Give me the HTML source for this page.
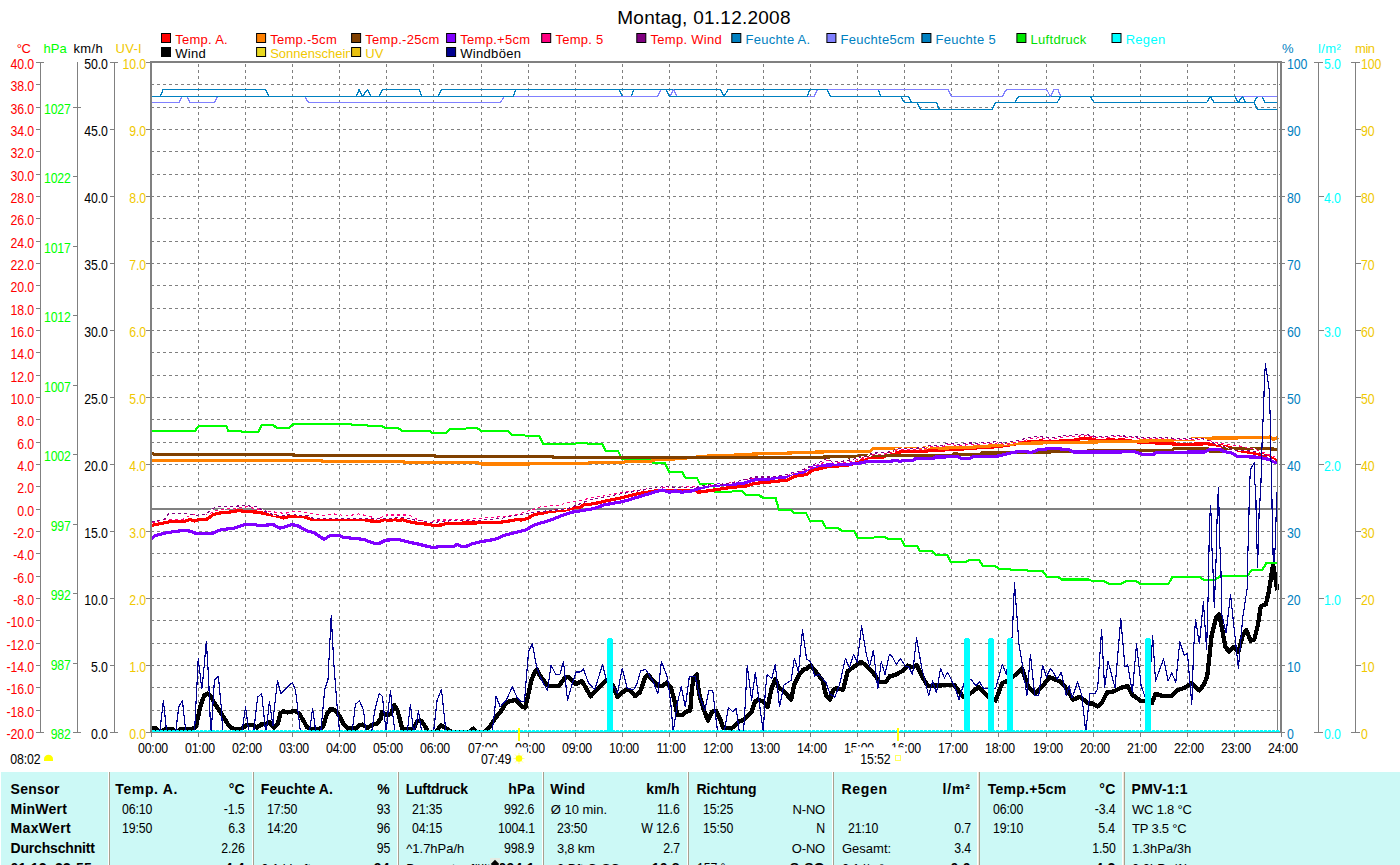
<!DOCTYPE html>
<html><head><meta charset="utf-8"><title>Montag, 01.12.2008</title>
<style>
html,body{margin:0;padding:0;background:#fff;}
body{width:1400px;height:865px;overflow:hidden;position:relative;font-family:"Liberation Sans",sans-serif;}
svg{position:absolute;left:0;top:0;}
svg text{font-family:"Liberation Sans",sans-serif;font-size:13px;letter-spacing:-0.45px;}
.b{font-weight:bold;}
#tbl{position:absolute;left:1px;top:772px;width:1399px;height:93px;background:#CCF9F6;overflow:hidden;}
#tbl div{position:absolute;white-space:nowrap;font-size:13px;line-height:15px;color:#000;}
#tbl .sep3{width:3px;top:0;height:93px;background:linear-gradient(90deg,#ffffff 0 1px,#F0E8D8 1px 2px,#A8A090 2px 3px);}
#tbl .sep{width:2px;top:0;height:93px;background:linear-gradient(90deg,#ffffff 0 1px,#A8A090 1px 2px);}
</style></head><body>
<svg width="1400" height="865" viewBox="0 0 1400 865">
<text x="704" y="24" text-anchor="middle" style="font-size:19px;letter-spacing:0.25px">Montag, 01.12.2008</text>
<rect x="161.5" y="33.5" width="9" height="9" fill="#FF0000" stroke="#000" stroke-width="1"/>
<text x="175.2" y="43.8" fill="#FF0000" style="letter-spacing:0.28px">Temp. A.</text>
<rect x="256.6" y="33.5" width="9" height="9" fill="#FF8000" stroke="#000" stroke-width="1"/>
<text x="270.2" y="43.8" fill="#FF0000" style="letter-spacing:0.28px">Temp.-5cm</text>
<rect x="351.6" y="33.5" width="9" height="9" fill="#804000" stroke="#000" stroke-width="1"/>
<text x="365.3" y="43.8" fill="#FF0000" style="letter-spacing:0.28px">Temp.-25cm</text>
<rect x="446.6" y="33.5" width="9" height="9" fill="#8000FF" stroke="#000" stroke-width="1"/>
<text x="460.3" y="43.8" fill="#FF0000" style="letter-spacing:0.28px">Temp.+5cm</text>
<rect x="541.7" y="33.5" width="9" height="9" fill="#FF0080" stroke="#000" stroke-width="1"/>
<text x="555.4" y="43.8" fill="#FF0000" style="letter-spacing:0.28px">Temp. 5</text>
<rect x="636.8" y="33.5" width="9" height="9" fill="#800080" stroke="#000" stroke-width="1"/>
<text x="650.5" y="43.8" fill="#FF0000" style="letter-spacing:0.28px">Temp. Wind</text>
<rect x="731.8" y="33.5" width="9" height="9" fill="#0080C0" stroke="#000" stroke-width="1"/>
<text x="745.5" y="43.8" fill="#0080C0" style="letter-spacing:0.28px">Feuchte A.</text>
<rect x="826.9" y="33.5" width="9" height="9" fill="#8080FF" stroke="#000" stroke-width="1"/>
<text x="840.6" y="43.8" fill="#0080C0" style="letter-spacing:0.28px">Feuchte5cm</text>
<rect x="921.9" y="33.5" width="9" height="9" fill="#0080C0" stroke="#000" stroke-width="1"/>
<text x="935.6" y="43.8" fill="#0080C0" style="letter-spacing:0.28px">Feuchte 5</text>
<rect x="1016.9" y="33.5" width="9" height="9" fill="#00E800" stroke="#000" stroke-width="1"/>
<text x="1030.6" y="43.8" fill="#00E000" style="letter-spacing:0.28px">Luftdruck</text>
<rect x="1112.0" y="33.5" width="9" height="9" fill="#00FFFF" stroke="#000" stroke-width="1"/>
<text x="1125.7" y="43.8" fill="#00FFFF" style="letter-spacing:0.28px">Regen</text>
<text x="175.2" y="57.6" fill="#000" style="letter-spacing:0.3px">Wind</text>
<text x="270.2" y="57.6" fill="#F0C800" style="letter-spacing:0px">Sonnenschein</text>
<text x="365.3" y="57.6" fill="#F0C800" style="letter-spacing:0px">UV</text>
<text x="460.3" y="57.6" fill="#000" style="letter-spacing:0.3px">Windböen</text>
<rect x="161.5" y="47.5" width="9" height="9" fill="#000000" stroke="#000" stroke-width="1"/>
<rect x="256.6" y="47.5" width="9" height="9" fill="#E8D820" stroke="#000" stroke-width="1"/>
<rect x="350.1" y="45" width="13" height="14" fill="#fff"/>
<rect x="351.6" y="47.5" width="9" height="9" fill="#E8C010" stroke="#000" stroke-width="1"/>
<rect x="446.6" y="47.5" width="9" height="9" fill="#000090" stroke="#000" stroke-width="1"/>
<g shape-rendering="crispEdges" fill="none">
<line x1="151" x2="1280" y1="84.5" y2="84.5" stroke="#808080" stroke-width="1" stroke-dasharray="3 3"/>
<line x1="151" x2="1280" y1="107.5" y2="107.5" stroke="#808080" stroke-width="1" stroke-dasharray="3 3"/>
<line x1="151" x2="1280" y1="129.5" y2="129.5" stroke="#808080" stroke-width="1" stroke-dasharray="3 3"/>
<line x1="151" x2="1280" y1="151.5" y2="151.5" stroke="#808080" stroke-width="1" stroke-dasharray="3 3"/>
<line x1="151" x2="1280" y1="174.5" y2="174.5" stroke="#808080" stroke-width="1" stroke-dasharray="3 3"/>
<line x1="151" x2="1280" y1="196.5" y2="196.5" stroke="#808080" stroke-width="1" stroke-dasharray="3 3"/>
<line x1="151" x2="1280" y1="218.5" y2="218.5" stroke="#808080" stroke-width="1" stroke-dasharray="3 3"/>
<line x1="151" x2="1280" y1="241.5" y2="241.5" stroke="#808080" stroke-width="1" stroke-dasharray="3 3"/>
<line x1="151" x2="1280" y1="263.5" y2="263.5" stroke="#808080" stroke-width="1" stroke-dasharray="3 3"/>
<line x1="151" x2="1280" y1="285.5" y2="285.5" stroke="#808080" stroke-width="1" stroke-dasharray="3 3"/>
<line x1="151" x2="1280" y1="308.5" y2="308.5" stroke="#808080" stroke-width="1" stroke-dasharray="3 3"/>
<line x1="151" x2="1280" y1="330.5" y2="330.5" stroke="#808080" stroke-width="1" stroke-dasharray="3 3"/>
<line x1="151" x2="1280" y1="352.5" y2="352.5" stroke="#808080" stroke-width="1" stroke-dasharray="3 3"/>
<line x1="151" x2="1280" y1="375.5" y2="375.5" stroke="#808080" stroke-width="1" stroke-dasharray="3 3"/>
<line x1="151" x2="1280" y1="397.5" y2="397.5" stroke="#808080" stroke-width="1" stroke-dasharray="3 3"/>
<line x1="151" x2="1280" y1="419.5" y2="419.5" stroke="#808080" stroke-width="1" stroke-dasharray="3 3"/>
<line x1="151" x2="1280" y1="442.5" y2="442.5" stroke="#808080" stroke-width="1" stroke-dasharray="3 3"/>
<line x1="151" x2="1280" y1="464.5" y2="464.5" stroke="#808080" stroke-width="1" stroke-dasharray="3 3"/>
<line x1="151" x2="1280" y1="486.5" y2="486.5" stroke="#808080" stroke-width="1" stroke-dasharray="3 3"/>
<line x1="151" x2="1280" y1="509.5" y2="509.5" stroke="#808080" stroke-width="1" stroke-dasharray="3 3"/>
<line x1="151" x2="1280" y1="531.5" y2="531.5" stroke="#808080" stroke-width="1" stroke-dasharray="3 3"/>
<line x1="151" x2="1280" y1="553.5" y2="553.5" stroke="#808080" stroke-width="1" stroke-dasharray="3 3"/>
<line x1="151" x2="1280" y1="576.5" y2="576.5" stroke="#808080" stroke-width="1" stroke-dasharray="3 3"/>
<line x1="151" x2="1280" y1="598.5" y2="598.5" stroke="#808080" stroke-width="1" stroke-dasharray="3 3"/>
<line x1="151" x2="1280" y1="620.5" y2="620.5" stroke="#808080" stroke-width="1" stroke-dasharray="3 3"/>
<line x1="151" x2="1280" y1="643.5" y2="643.5" stroke="#808080" stroke-width="1" stroke-dasharray="3 3"/>
<line x1="151" x2="1280" y1="665.5" y2="665.5" stroke="#808080" stroke-width="1" stroke-dasharray="3 3"/>
<line x1="151" x2="1280" y1="687.5" y2="687.5" stroke="#808080" stroke-width="1" stroke-dasharray="3 3"/>
<line x1="151" x2="1280" y1="710.5" y2="710.5" stroke="#808080" stroke-width="1" stroke-dasharray="3 3"/>
<line x1="198.5" x2="198.5" y1="733" y2="63" stroke="#808080" stroke-width="1" stroke-dasharray="3 3"/>
<line x1="245.5" x2="245.5" y1="733" y2="63" stroke="#808080" stroke-width="1" stroke-dasharray="3 3"/>
<line x1="292.5" x2="292.5" y1="733" y2="63" stroke="#808080" stroke-width="1" stroke-dasharray="3 3"/>
<line x1="339.5" x2="339.5" y1="733" y2="63" stroke="#808080" stroke-width="1" stroke-dasharray="3 3"/>
<line x1="386.5" x2="386.5" y1="733" y2="63" stroke="#808080" stroke-width="1" stroke-dasharray="3 3"/>
<line x1="433.5" x2="433.5" y1="733" y2="63" stroke="#808080" stroke-width="1" stroke-dasharray="3 3"/>
<line x1="481.5" x2="481.5" y1="733" y2="63" stroke="#808080" stroke-width="1" stroke-dasharray="3 3"/>
<line x1="528.5" x2="528.5" y1="733" y2="63" stroke="#808080" stroke-width="1" stroke-dasharray="3 3"/>
<line x1="575.5" x2="575.5" y1="733" y2="63" stroke="#808080" stroke-width="1" stroke-dasharray="3 3"/>
<line x1="622.5" x2="622.5" y1="733" y2="63" stroke="#808080" stroke-width="1" stroke-dasharray="3 3"/>
<line x1="669.5" x2="669.5" y1="733" y2="63" stroke="#808080" stroke-width="1" stroke-dasharray="3 3"/>
<line x1="716.5" x2="716.5" y1="733" y2="63" stroke="#808080" stroke-width="1" stroke-dasharray="3 3"/>
<line x1="763.5" x2="763.5" y1="733" y2="63" stroke="#808080" stroke-width="1" stroke-dasharray="3 3"/>
<line x1="810.5" x2="810.5" y1="733" y2="63" stroke="#808080" stroke-width="1" stroke-dasharray="3 3"/>
<line x1="857.5" x2="857.5" y1="733" y2="63" stroke="#808080" stroke-width="1" stroke-dasharray="3 3"/>
<line x1="904.5" x2="904.5" y1="733" y2="63" stroke="#808080" stroke-width="1" stroke-dasharray="3 3"/>
<line x1="951.5" x2="951.5" y1="733" y2="63" stroke="#808080" stroke-width="1" stroke-dasharray="3 3"/>
<line x1="998.5" x2="998.5" y1="733" y2="63" stroke="#808080" stroke-width="1" stroke-dasharray="3 3"/>
<line x1="1046.5" x2="1046.5" y1="733" y2="63" stroke="#808080" stroke-width="1" stroke-dasharray="3 3"/>
<line x1="1093.5" x2="1093.5" y1="733" y2="63" stroke="#808080" stroke-width="1" stroke-dasharray="3 3"/>
<line x1="1140.5" x2="1140.5" y1="733" y2="63" stroke="#808080" stroke-width="1" stroke-dasharray="3 3"/>
<line x1="1187.5" x2="1187.5" y1="733" y2="63" stroke="#808080" stroke-width="1" stroke-dasharray="3 3"/>
<line x1="1234.5" x2="1234.5" y1="733" y2="63" stroke="#808080" stroke-width="1" stroke-dasharray="3 3"/>
</g>
<clipPath id="pc"><rect x="152" y="63" width="1128" height="669"/></clipPath>
<g id="data" clip-path="url(#pc)" shape-rendering="crispEdges">
<rect x="152" y="508" width="1128" height="2" fill="#808080" shape-rendering="crispEdges"/>
<polyline points="151.6,728.6 156.5,728.6 159.7,732.2 166.2,728.6 172.7,729.0 175.9,732.2 180.7,729.0 193.7,728.6 196.1,726.2 200.2,706.8 204.2,695.5 207.4,693.5 210.7,696.3 214.7,703.6 221.2,713.3 227.7,723.8 230.9,727.8 234.1,729.0 240.6,729.0 243.0,727.8 247.1,724.9 253.6,724.9 256.8,727.8 260.8,724.6 266.5,723.8 269.7,722.2 273.8,727.8 277.8,723.8 280.3,713.3 283.5,711.3 287.5,712.5 294.8,710.8 298.9,713.3 302.9,719.7 307.0,727.0 309.4,729.0 319.9,729.0 323.1,726.2 327.2,713.3 331.2,708.7 335.3,710.8 340.1,716.5 343.2,723.8 348.1,728.6 355.4,728.6 359.4,725.4 362.7,724.6 367.5,727.8 372.4,724.6 377.2,723.8 380.5,718.9 382.1,711.7 386.1,714.9 391.0,714.1 394.2,705.2 397.4,710.0 399.9,719.7 402.3,728.6 408.0,729.0 413.6,729.0 416.9,721.4 420.9,720.6 424.1,724.6 428.2,732.2 435.5,732.2 441.1,725.4 445.2,727.8 451.7,732.2 469.4,732.2 473.5,728.6 476.7,732.2 484.8,732.2 491.3,724.6 495.3,718.1 501.8,710.0 505.0,704.4 509.1,701.1 515.6,700.0 518.8,702.8 522.0,706.8 525.3,707.6 527.7,697.1 531.7,679.3 535.0,672.0 536.8,669.6 539.7,675.2 547.8,685.8 559.1,685.8 564.8,677.7 568.8,676.9 576.1,684.1 581.8,680.9 590.7,696.3 606.1,680.1 613.3,685.8 617.4,697.1 625.5,689.8 629.5,689.8 635.2,696.3 640.0,692.2 644.9,677.7 648.1,674.8 657.8,685.8 662.7,685.8 666.7,682.5 670.8,687.4 674.8,701.9 677.2,714.9 682.1,714.9 686.1,711.7 690.2,710.8 691.8,690.6 693.4,677.7 696.7,674.4 698.3,687.4 699.9,697.1 703.9,710.0 708.0,720.6 712.0,711.7 716.1,710.8 720.1,719.0 723.2,727.8 731.3,728.6 739.4,721.4 744.3,719.7 751.6,711.7 754.8,701.9 758.0,699.5 763.7,701.9 767.7,706.8 771.8,687.4 775.3,679.3 779.1,688.2 782.3,689.8 791.2,699.5 794.4,684.1 799.3,674.4 803.3,669.6 806.6,668.8 810.6,665.5 815.5,671.2 822.8,680.9 826.0,695.5 830.0,699.5 833.3,689.8 836.5,688.2 843.0,689.8 847.8,671.2 851.1,668.8 860.8,661.8 865.6,664.7 872.1,671.2 879.4,681.7 885.9,681.7 889.9,676.1 894.8,675.2 902.0,671.2 907.7,665.5 912.6,667.2 916.6,664.9 921.8,676.1 927.7,685.9 954.2,684.9 963.0,696.7 969.9,693.8 978.8,686.9 988.6,696.7 995.5,700.6 1002.3,683.0 1007.2,681.0 1015.1,675.1 1022.0,668.2 1027.9,685.9 1034.8,693.8 1043.6,684.9 1049.5,677.1 1061.3,682.0 1067.2,689.8 1073.1,699.7 1079.9,696.7 1088.8,703.6 1092.7,703.6 1097.6,706.5 1102.5,701.6 1106.9,692.6 1113.9,691.4 1120.8,687.9 1127.7,686.1 1132.4,694.9 1140.5,700.7 1146.2,700.7 1152.0,703.0 1155.5,693.7 1162.4,696.0 1171.7,696.0 1177.4,690.3 1184.4,687.9 1191.3,683.3 1199.4,690.3 1204.0,684.5 1207.3,675.6 1211.7,635.1 1216.0,617.8 1218.9,614.2 1221.1,623.6 1225.4,646.7 1229.0,651.8 1234.1,646.7 1238.4,651.8 1242.7,635.1 1246.4,630.1 1250.7,640.9 1254.3,639.5 1257.9,625.0 1260.8,606.2 1265.9,604.1 1268.8,591.8 1273.1,564.3 1277.3,590.3" fill="none" stroke="#000000" stroke-width="4.3" stroke-linejoin="round" />
<polyline points="152.0,431.0 195.0,431.0 199.0,425.6 226.0,425.6 228.4,431.0 241.0,431.0 242.0,432.0 258.0,432.0 262.0,425.0 273.0,425.0 277.0,428.0 289.0,428.0 293.6,424.0 351.0,424.0 352.0,424.8 367.0,424.8 368.4,426.0 382.0,426.0 385.6,428.0 398.0,428.0 402.0,430.8 430.0,430.8 432.0,433.0 446.0,433.0 450.0,429.0 465.0,429.0 467.0,428.0 477.0,428.0 481.0,430.8 508.0,430.8 512.0,435.0 524.0,435.0 526.0,436.0 539.4,436.0 543.0,444.0 575.0,444.0 577.0,443.0 587.0,443.0 588.4,444.0 602.0,444.0 606.0,451.0 618.0,451.0 622.0,459.0 652.0,459.0 653.0,463.0 665.0,463.0 669.0,472.0 682.0,472.0 685.6,478.0 697.0,478.0 700.0,484.0 713.0,484.0 715.0,492.0 731.0,492.0 733.0,491.0 742.4,491.0 746.4,495.0 759.0,495.0 763.0,498.0 775.6,498.0 779.0,510.0 791.0,510.0 794.0,513.0 806.0,513.0 810.0,521.0 822.4,521.0 826.0,528.0 838.0,528.0 842.0,531.0 854.0,531.0 857.6,538.0 873.0,538.0 875.0,537.0 885.0,537.0 888.0,539.0 901.0,539.0 904.4,545.6 917.0,545.6 920.0,551.0 932.0,551.0 936.0,555.0 947.0,555.0 951.0,562.0 966.0,562.0 969.4,560.1 978.9,560.1 983.1,566.0 995.4,566.0 998.9,569.1 1009.5,569.1 1011.9,570.0 1026.0,570.0 1028.0,570.8 1042.5,570.8 1046.7,576.6 1057.8,576.6 1061.4,579.5 1088.5,579.5 1092.0,580.9 1103.8,580.9 1108.5,583.7 1121.5,583.7 1126.2,580.9 1135.6,580.9 1140.3,583.7 1168.6,583.7 1172.1,577.1 1186.3,577.1 1188.0,576.6 1199.3,576.6 1204.0,580.2 1214.6,580.2 1220.5,575.9 1247.6,575.9 1251.8,569.6 1262.4,569.6 1266.4,563.0 1277.0,563.0" fill="none" stroke="#00FF00" stroke-width="2.2" stroke-linejoin="round" />
<polyline points="151.6,525.4 159.9,523.7 169.7,521.8 182.9,521.8 190.2,519.6 194.4,521.0 199.3,519.6 206.7,519.3 213.2,514.7 219.0,513.1 223.9,512.7 232.1,511.8 237.9,510.6 245.3,511.4 258.4,512.2 268.3,514.4 278.1,516.4 283.9,518.0 289.6,516.4 302.8,516.4 311.0,519.3 330.7,519.6 363.6,519.6 371.0,521.0 379.9,521.3 384.8,519.6 389.7,520.5 394.6,519.6 398.7,520.5 402.9,519.6 407.0,521.3 417.6,523.3 427.5,524.2 433.2,525.4 442.3,524.9 446.4,523.3 478.4,522.9 481.7,522.1 501.4,522.1 512.9,520.5 516.2,519.3 521.1,520.1 527.7,518.3 534.3,514.7 542.5,513.1 550.7,511.4 567.1,509.8 572.1,508.1 580.3,507.3 583.6,504.9 591.8,504.0 600.0,502.4 606.4,500.8 622.9,497.5 639.3,493.4 655.7,490.9 663.9,490.1 695.1,490.1 698.4,492.2 713.2,490.1 729.6,487.6 746.1,486.0 754.3,483.5 770.7,481.9 787.1,480.2 795.4,476.1 806.9,474.5 811.8,470.4 816.6,469.4 826.4,466.9 847.8,465.2 859.3,462.0 862.6,459.1 867.7,457.9 883.1,457.4 891.7,453.1 901.1,451.9 926.9,451.0 941.4,450.1 957.7,449.3 971.4,448.4 980.0,447.6 997.4,446.7 1008.9,445.0 1027.1,442.1 1040.9,441.0 1050.0,441.6 1072.9,440.4 1084.3,438.1 1093.4,439.3 1099.1,441.0 1111.7,439.3 1116.3,440.4 1120.9,439.5 1138.2,442.0 1160.1,443.2 1180.7,444.4 1207.4,443.8 1217.1,445.0 1229.3,447.5 1241.4,451.1 1253.6,452.9 1265.7,455.4 1271.8,458.4 1277.9,460.8" fill="none" stroke="#FF0000" stroke-width="3.2" stroke-linejoin="round" />
<polyline points="152.0,460.4 322.0,460.4 322.5,461.6 404.0,461.6 404.5,462.6 478.0,462.6 481.0,464.0 529.0,464.0 535.0,463.2 588.0,463.2 590.0,462.6 622.0,462.6 626.0,461.6 650.0,461.6 653.0,460.0 675.4,458.9 709.9,455.9 734.6,455.1 754.3,454.0 787.1,453.1 811.8,452.2 839.6,451.5 870.3,451.4 872.9,448.4 902.9,448.4 918.3,448.4 928.6,447.8 945.7,448.0 970.0,447.3 995.1,445.6 1020.3,443.3 1054.6,442.7 1099.1,441.9 1130.0,441.3 1154.0,440.8 1180.7,439.6 1212.3,438.1 1252.4,437.8 1269.4,437.1 1273.6,439.3 1277.9,437.1" fill="none" stroke="#FF8000" stroke-width="3.2" stroke-linejoin="round" />
<polyline points="152.0,453.0 154.0,454.4 294.0,454.4 294.5,455.6 435.0,455.6 435.5,456.6 553.0,456.6 553.5,457.4 820.0,457.2 847.0,456.4 849.0,457.0 856.0,456.2 870.0,455.4 952.6,455.3 953.4,454.0 957.7,454.0 958.6,454.9 980.0,454.4 981.4,453.0 1007.7,453.0 1030.0,452.4 1087.0,451.1 1139.4,450.9 1172.2,450.5 1174.6,448.1 1207.4,448.1 1209.9,451.1 1221.0,451.1 1223.2,448.7 1252.4,448.1 1277.9,449.3" fill="none" stroke="#804000" stroke-width="3.2" stroke-linejoin="round" />
<polyline points="151.6,539.0 154.9,535.7 164.8,533.1 174.6,531.5 184.5,530.3 189.4,531.1 196.8,533.6 211.6,533.6 220.6,529.8 233.8,528.2 244.5,524.6 255.1,524.6 258.4,525.4 266.6,525.1 273.2,524.6 279.8,528.3 292.1,524.6 297.9,525.9 307.7,531.1 314.3,532.8 324.1,539.4 330.7,535.2 338.9,535.2 343.8,537.4 363.6,539.4 373.4,543.1 379.0,543.5 385.6,540.2 397.9,539.4 409.4,542.3 419.3,544.3 427.5,546.4 433.2,547.6 440.6,546.4 453.8,546.4 457.1,544.3 462.0,546.7 466.1,546.4 471.9,543.8 481.7,541.5 494.9,539.4 504.7,535.2 514.6,532.8 526.1,529.8 534.3,524.9 544.1,522.1 554.0,518.8 563.9,514.7 572.1,512.2 581.9,510.6 591.8,509.0 600.0,506.5 603.1,505.0 622.9,501.6 639.3,496.7 655.7,491.7 662.3,490.1 668.9,492.2 675.4,490.9 682.0,492.2 691.9,490.9 698.4,488.5 708.3,486.0 714.9,485.2 729.6,484.4 742.8,483.5 755.9,479.4 769.1,479.1 775.6,477.8 783.9,477.5 792.1,473.7 803.6,472.0 810.1,468.0 819.9,465.3 847.8,464.4 860.0,463.0 868.6,461.3 891.7,461.3 892.6,460.4 897.7,460.4 899.4,461.7 902.9,460.4 913.1,460.4 915.7,458.3 933.7,458.3 935.4,457.0 945.7,457.0 946.6,456.1 956.9,456.1 961.1,458.3 969.7,458.3 974.0,456.3 996.3,456.4 1013.4,452.4 1021.4,451.3 1031.7,452.4 1038.6,449.6 1053.4,448.4 1068.3,449.6 1072.9,451.9 1122.0,451.9 1124.3,451.3 1134.6,451.7 1141.9,454.1 1154.0,454.1 1156.4,452.3 1205.0,452.0 1209.9,449.3 1219.6,449.3 1224.4,451.7 1231.7,452.9 1237.8,456.6 1259.6,457.2 1269.4,459.6 1277.9,463.3" fill="none" stroke="#8000FF" stroke-width="3.2" stroke-linejoin="round" />
<polyline points="151.6,522.6 164.8,519.6 182.9,519.3 191.1,514.7 207.5,514.4 219.0,509.5 235.4,508.1 246.9,506.8 265.0,510.6 284.7,513.4 296.2,511.1 311.0,513.4 322.5,515.5 334.0,513.9 347.1,516.0 358.6,513.9 370.0,516.4 376.6,519.3 386.4,515.0 409.4,515.0 417.6,519.6 432.4,522.1 435.7,520.0 458.7,520.0 478.4,518.3 501.4,516.7 517.9,514.4 534.3,509.0 542.5,506.2 558.9,505.7 567.1,502.4 580.3,500.7 591.8,497.5 600.0,496.6 622.9,492.6 655.7,487.6 695.1,486.8 729.6,483.0 754.3,477.8 787.1,475.3 803.6,470.4 820.0,464.6 827.9,459.9 834.5,463.2 844.4,462.3 854.2,460.7 860.8,458.2 867.5,457.8 873.5,454.3 887.2,453.9 894.1,452.2 897.5,449.6 904.4,449.2 912.9,449.6 926.6,448.8 930.1,446.6 942.9,446.6 947.2,444.9 951.5,444.1 955.8,445.3 964.4,445.3 968.6,444.1 981.5,444.5 982.9,443.9 994.4,443.3 998.9,442.8 1005.8,444.5 1017.2,442.2 1030.9,438.8 1040.1,437.6 1051.5,439.3 1062.9,437.1 1074.4,436.5 1085.8,435.3 1097.2,437.6 1108.6,437.6 1114.4,436.5 1131.5,437.6 1139.7,438.3 1205.0,439.6 1217.1,442.6 1241.4,446.3 1253.6,448.7 1265.7,453.5 1275.4,457.2" fill="none" stroke="#FFFFFF" stroke-width="1.1" stroke-linejoin="round" />
<polyline points="151.6,522.6 164.8,519.6 182.9,519.3 191.1,514.7 207.5,514.4 219.0,509.5 235.4,508.1 246.9,506.8 265.0,510.6 284.7,513.4 296.2,511.1 311.0,513.4 322.5,515.5 334.0,513.9 347.1,516.0 358.6,513.9 370.0,516.4 376.6,519.3 386.4,515.0 409.4,515.0 417.6,519.6 432.4,522.1 435.7,520.0 458.7,520.0 478.4,518.3 501.4,516.7 517.9,514.4 534.3,509.0 542.5,506.2 558.9,505.7 567.1,502.4 580.3,500.7 591.8,497.5 600.0,496.6 622.9,492.6 655.7,487.6 695.1,486.8 729.6,483.0 754.3,477.8 787.1,475.3 803.6,470.4 820.0,464.6 827.9,459.9 834.5,463.2 844.4,462.3 854.2,460.7 860.8,458.2 867.5,457.8 873.5,454.3 887.2,453.9 894.1,452.2 897.5,449.6 904.4,449.2 912.9,449.6 926.6,448.8 930.1,446.6 942.9,446.6 947.2,444.9 951.5,444.1 955.8,445.3 964.4,445.3 968.6,444.1 981.5,444.5 982.9,443.9 994.4,443.3 998.9,442.8 1005.8,444.5 1017.2,442.2 1030.9,438.8 1040.1,437.6 1051.5,439.3 1062.9,437.1 1074.4,436.5 1085.8,435.3 1097.2,437.6 1108.6,437.6 1114.4,436.5 1131.5,437.6 1139.7,438.3 1205.0,439.6 1217.1,442.6 1241.4,446.3 1253.6,448.7 1265.7,453.5 1275.4,457.2" fill="none" stroke="#FF0080" stroke-width="1.1" stroke-linejoin="round" stroke-dasharray="3 3"/>
<polyline points="151.6,522.1 164.0,519.6 168.9,513.4 187.8,513.4 194.4,515.5 205.9,513.9 215.7,506.8 246.9,505.7 256.8,506.8 265.0,511.4 274.9,515.5 291.3,514.7 307.7,515.5 314.3,518.8 380.0,518.8 402.0,517.5 417.0,520.5 433.0,522.5 446.0,521.0 478.0,520.5 501.4,518.3 527.7,513.1 540.9,511.4 567.1,509.0 583.6,502.4 590.0,500.0 622.9,493.4 662.3,486.8 695.1,487.6 705.0,485.2 729.6,483.5 754.3,477.0 770.7,477.0 787.1,474.5 803.6,469.6 810.0,466.1 819.9,462.0 826.4,458.7 833.0,462.0 842.9,461.1 852.7,459.5 859.3,457.0 866.0,456.6 872.0,453.1 885.7,452.7 892.6,451.0 896.0,448.4 902.9,448.0 911.4,448.4 925.1,447.6 928.6,445.4 941.4,445.4 945.7,443.7 950.0,442.9 954.3,444.1 962.9,444.1 967.1,442.9 980.0,443.3 981.4,442.7 992.9,442.1 997.4,441.6 1004.3,443.3 1015.7,441.0 1029.4,437.6 1038.6,436.4 1050.0,438.1 1061.4,435.9 1072.9,435.3 1084.3,434.1 1095.7,436.4 1107.1,436.4 1112.9,435.3 1130.0,436.4 1138.2,437.1 1205.0,439.0 1212.3,442.6 1223.2,446.3 1235.4,450.5 1253.6,451.1 1265.7,455.4 1276.6,461.4" fill="none" stroke="#FFFFFF" stroke-width="1.1" stroke-linejoin="round" />
<polyline points="151.6,522.1 164.0,519.6 168.9,513.4 187.8,513.4 194.4,515.5 205.9,513.9 215.7,506.8 246.9,505.7 256.8,506.8 265.0,511.4 274.9,515.5 291.3,514.7 307.7,515.5 314.3,518.8 380.0,518.8 402.0,517.5 417.0,520.5 433.0,522.5 446.0,521.0 478.0,520.5 501.4,518.3 527.7,513.1 540.9,511.4 567.1,509.0 583.6,502.4 590.0,500.0 622.9,493.4 662.3,486.8 695.1,487.6 705.0,485.2 729.6,483.5 754.3,477.0 770.7,477.0 787.1,474.5 803.6,469.6 810.0,466.1 819.9,462.0 826.4,458.7 833.0,462.0 842.9,461.1 852.7,459.5 859.3,457.0 866.0,456.6 872.0,453.1 885.7,452.7 892.6,451.0 896.0,448.4 902.9,448.0 911.4,448.4 925.1,447.6 928.6,445.4 941.4,445.4 945.7,443.7 950.0,442.9 954.3,444.1 962.9,444.1 967.1,442.9 980.0,443.3 981.4,442.7 992.9,442.1 997.4,441.6 1004.3,443.3 1015.7,441.0 1029.4,437.6 1038.6,436.4 1050.0,438.1 1061.4,435.9 1072.9,435.3 1084.3,434.1 1095.7,436.4 1107.1,436.4 1112.9,435.3 1130.0,436.4 1138.2,437.1 1205.0,439.0 1212.3,442.6 1223.2,446.3 1235.4,450.5 1253.6,451.1 1265.7,455.4 1276.6,461.4" fill="none" stroke="#800080" stroke-width="1.1" stroke-linejoin="round" stroke-dasharray="3 3"/>
<polyline points="152.0,732.5 159.7,732.5 163.4,700.3 166.7,732.5 170.0,732.5 175.6,732.5 178.8,706.8 182.4,700.6 185.9,732.5 190.0,732.5 194.5,732.5 196.9,685.8 198.2,658.3 201.8,689.0 203.4,674.4 206.3,641.3 208.6,677.7 210.7,732.5 211.2,732.5 214.4,680.1 218.4,676.1 221.2,706.8 222.8,732.5 241.9,732.5 245.5,706.8 249.0,732.5 253.6,732.5 257.6,697.1 261.7,693.5 265.7,732.5 266.2,732.5 269.4,701.1 273.0,726.2 273.8,713.3 277.5,680.1 280.7,693.5 292.4,682.5 295.6,690.6 300.5,732.5 309.4,732.5 312.6,708.4 315.9,732.5 320.7,732.5 324.8,689.0 328.0,679.3 331.2,615.4 333.7,661.5 336.9,703.6 339.6,732.5 352.1,732.5 355.4,704.4 359.4,700.6 363.5,710.0 365.9,732.5 371.6,732.5 374.8,710.0 379.3,693.4 382.4,696.3 384.5,716.5 386.1,732.5 388.5,706.8 390.5,690.3 392.6,713.3 395.0,732.5 407.2,732.5 410.4,704.4 413.6,732.5 416.1,724.6 418.5,710.8 421.7,732.5 433.5,732.5 437.1,700.3 441.5,689.5 445.2,724.6 446.0,732.5 492.0,732.5 493.7,719.7 496.1,696.3 500.2,706.8 506.7,699.5 512.3,686.6 517.2,697.9 520.4,701.1 524.5,701.1 527.7,661.5 528.5,651.8 532.4,643.7 536.5,666.3 541.3,679.3 547.5,690.6 551.0,665.5 555.9,674.4 559.9,674.4 563.5,661.5 567.5,700.3 572.1,684.1 576.1,672.0 580.2,672.0 583.4,668.8 588.3,682.5 594.7,689.8 602.5,664.7 606.1,679.3 614.1,687.4 617.4,693.9 622.2,668.0 627.1,688.2 633.6,689.8 636.8,684.1 640.8,670.4 645.7,669.6 653.0,680.9 657.8,693.9 661.4,661.5 667.5,677.7 670.8,703.6 673.2,732.5 677.2,703.6 681.3,686.6 685.3,706.8 689.4,676.1 695.0,676.1 699.9,697.1 704.8,710.0 708.8,690.6 712.8,690.6 715.3,713.3 717.7,732.5 724.2,732.5 728.4,707.6 732.9,711.7 736.2,708.4 739.4,732.5 743.5,732.5 745.1,706.8 747.2,665.5 751.6,700.3 755.3,672.5 760.5,711.7 763.4,732.5 765.3,690.6 767.2,674.4 771.8,678.5 775.3,664.4 779.5,706.8 783.9,685.0 791.2,680.1 794.4,658.3 798.5,672.0 802.5,629.9 806.6,659.1 810.6,661.5 814.7,676.1 818.7,674.4 826.0,682.5 830.0,693.9 834.9,697.1 839.7,684.1 845.4,658.3 849.4,668.0 853.5,654.2 857.2,662.3 861.6,625.9 866.4,655.0 869.7,666.3 873.4,650.2 877.8,689.0 881.3,661.5 885.0,674.4 889.4,654.2 892.3,656.6 896.4,664.7 900.4,658.3 905.3,666.3 908.5,666.3 912.6,674.4 916.5,637.8 921.8,668.2 928.7,695.7 932.6,681.0 936.5,692.8 940.5,668.2 944.4,678.1 947.7,672.2 955.2,687.9 959.1,699.7 964.0,683.0 970.9,679.0 975.8,685.9 979.7,682.0 983.7,688.9 995.5,688.9 1002.3,664.3 1006.3,674.1 1012.2,636.8 1014.5,582.8 1019.0,644.7 1023.0,668.2 1026.9,695.7 1030.4,654.5 1034.8,695.7 1038.7,695.7 1042.6,665.3 1046.5,677.1 1050.5,668.2 1057.3,679.0 1061.3,672.2 1066.2,695.7 1069.1,685.9 1072.1,697.7 1077.6,682.0 1081.9,695.7 1085.8,732.5 1089.8,693.8 1094.7,693.8 1097.6,688.9 1101.6,629.9 1104.6,687.9 1108.1,661.4 1115.0,687.9 1120.8,618.6 1125.0,667.1 1127.7,664.8 1132.4,692.6 1136.5,644.0 1141.1,685.6 1145.1,697.2 1149.0,690.0 1152.7,635.9 1155.5,681.0 1163.6,659.0 1168.2,681.0 1171.7,672.9 1175.8,682.2 1179.8,641.7 1184.4,655.6 1187.4,653.3 1191.8,704.1 1193.6,649.6 1195.5,619.2 1199.4,643.8 1203.4,601.6 1206.6,649.6 1208.1,596.1 1208.8,559.0 1209.5,524.4 1210.5,505.9 1211.4,520.0 1211.7,543.1 1212.8,564.8 1214.3,607.7 1216.0,561.9 1216.7,533.0 1217.5,502.7 1218.5,487.9 1218.9,505.6 1219.6,541.7 1220.6,556.2 1221.9,615.0 1226.1,633.0 1230.5,594.4 1238.4,668.4 1242.7,617.8 1247.1,588.9 1247.8,556.2 1248.8,521.5 1249.5,488.2 1250.4,469.5 1254.3,462.9 1254.6,481.0 1255.8,491.1 1256.2,517.1 1257.2,553.3 1257.6,567.7 1257.9,556.2 1259.1,512.8 1260.8,488.2 1261.5,462.9 1262.3,435.9 1263.7,405.6 1264.4,379.6 1265.4,364.0 1266.9,373.8 1269.2,389.7 1270.2,417.1 1270.9,460.5 1271.4,463.7 1272.1,509.9 1273.1,554.7 1274.1,561.9 1275.3,544.6 1276.0,520.0 1276.7,496.9 1277.7,484.6" fill="none" stroke="#000090" stroke-width="1.15" stroke-linejoin="round" stroke-linejoin="miter"/>
<rect x="152" y="731" width="1128" height="1" fill="#00FFFF" shape-rendering="crispEdges"/>
<line x1="152" x2="1280" y1="730.5" y2="730.5" stroke="#00FFFF" stroke-width="1" stroke-dasharray="3 1" shape-rendering="crispEdges"/>
<path d="M607.0 732 V641 a3 3 0 0 1 6 0 V732 Z" fill="#00FFFF"/>
<path d="M964.0 732 V641 a3 3 0 0 1 6 0 V732 Z" fill="#00FFFF"/>
<path d="M988.0 732 V641 a3 3 0 0 1 6 0 V732 Z" fill="#00FFFF"/>
<path d="M1007.0 732 V641 a3 3 0 0 1 6 0 V732 Z" fill="#00FFFF"/>
<path d="M1145.2 732 V641 a3 3 0 0 1 6 0 V732 Z" fill="#00FFFF"/>
<polyline points="152.0,96.5 160.4,96.5 163.2,89.5 265.6,89.5 269.0,96.5 356.0,96.5 359.2,89.5 362.4,96.5 367.4,89.5 371.0,96.5 379.0,96.5 382.6,89.5 419.0,89.5 422.0,96.5 438.0,96.5 441.4,89.5 619.0,89.5 622.4,96.5 631.0,96.5 634.0,89.5 720.5,89.5 724.0,96.5 728.0,89.5 878.0,89.5 881.0,96.5 908.4,96.5 911.6,102.5 936.4,102.5 939.6,109.5 991.8,109.5 995.4,102.5 1014.7,102.5 1018.5,96.5 1090.1,96.5 1094.4,102.5 1206.7,102.5 1210.2,96.5 1214.2,102.5 1253.8,102.5 1257.4,96.5 1261.7,96.5 1265.2,102.5 1277.0,102.5" fill="none" stroke="#0080C0" stroke-width="1.3" stroke-linejoin="round" />
<polyline points="152.0,102.5 179.0,102.5 182.0,96.5 187.0,96.5 190.0,102.5 214.4,102.5 217.6,96.5 305.0,96.5 308.4,102.5 500.6,102.5 504.0,96.5 657.7,96.5 660.8,89.5 665.8,89.5 669.3,96.5 669.9,96.5 673.4,89.5 676.9,96.5 814.0,96.5 817.6,89.5 948.0,89.5 951.6,96.5 1002.4,96.5 1006.4,89.5 1046.7,89.5 1050.3,96.5 1053.8,89.5 1057.8,89.5 1060.9,96.5 1277.0,96.5" fill="none" stroke="#8080FF" stroke-width="1.3" stroke-linejoin="round" />
<polyline points="152.0,96.5 513.0,96.5 516.0,89.5 665.8,89.5 669.3,96.5 807.0,96.5 810.0,89.5 827.0,89.5 830.4,96.5 901.0,96.5 904.4,102.5 917.0,102.5 920.4,109.5 991.8,109.5 995.4,102.5 1057.1,102.5 1060.9,96.5 1235.0,96.5 1238.1,102.5 1242.4,96.5 1245.6,102.5 1253.8,102.5 1257.4,109.5 1277.0,109.5" fill="none" stroke="#0080C0" stroke-width="1.3" stroke-linejoin="round" />
</g>
<g shape-rendering="crispEdges">
<rect x="150" y="61" width="1132" height="2" fill="#808080"/>
<rect x="150" y="61" width="2" height="672" fill="#808080"/>
<rect x="1280" y="61" width="2" height="672" fill="#808080"/>
<rect x="1277" y="63" width="1" height="667" fill="#808080"/>
<rect x="150" y="732" width="1132" height="1" fill="#808080"/>
<rect x="151" y="733" width="1" height="4" fill="#808080"/>
<rect x="198" y="733" width="1" height="4" fill="#808080"/>
<rect x="245" y="733" width="1" height="4" fill="#808080"/>
<rect x="292" y="733" width="1" height="4" fill="#808080"/>
<rect x="339" y="733" width="1" height="4" fill="#808080"/>
<rect x="386" y="733" width="1" height="4" fill="#808080"/>
<rect x="433" y="733" width="1" height="4" fill="#808080"/>
<rect x="481" y="733" width="1" height="4" fill="#808080"/>
<rect x="528" y="733" width="1" height="4" fill="#808080"/>
<rect x="575" y="733" width="1" height="4" fill="#808080"/>
<rect x="622" y="733" width="1" height="4" fill="#808080"/>
<rect x="669" y="733" width="1" height="4" fill="#808080"/>
<rect x="716" y="733" width="1" height="4" fill="#808080"/>
<rect x="763" y="733" width="1" height="4" fill="#808080"/>
<rect x="810" y="733" width="1" height="4" fill="#808080"/>
<rect x="857" y="733" width="1" height="4" fill="#808080"/>
<rect x="904" y="733" width="1" height="4" fill="#808080"/>
<rect x="951" y="733" width="1" height="4" fill="#808080"/>
<rect x="998" y="733" width="1" height="4" fill="#808080"/>
<rect x="1046" y="733" width="1" height="4" fill="#808080"/>
<rect x="1093" y="733" width="1" height="4" fill="#808080"/>
<rect x="1140" y="733" width="1" height="4" fill="#808080"/>
<rect x="1187" y="733" width="1" height="4" fill="#808080"/>
<rect x="1234" y="733" width="1" height="4" fill="#808080"/>
<rect x="1281" y="733" width="1" height="4" fill="#808080"/>
<rect x="40" y="62" width="1" height="671" fill="#808080"/>
<rect x="77" y="62" width="1" height="671" fill="#808080"/>
<rect x="114" y="62" width="1" height="671" fill="#808080"/>
<rect x="1318" y="62" width="1" height="671" fill="#808080"/>
<rect x="1355" y="62" width="1" height="671" fill="#808080"/>
<rect x="36" y="62" width="8" height="1" fill="#808080"/>
<rect x="36" y="84" width="4" height="1" fill="#808080"/>
<rect x="36" y="107" width="4" height="1" fill="#808080"/>
<rect x="36" y="129" width="4" height="1" fill="#808080"/>
<rect x="36" y="151" width="4" height="1" fill="#808080"/>
<rect x="36" y="174" width="4" height="1" fill="#808080"/>
<rect x="36" y="196" width="4" height="1" fill="#808080"/>
<rect x="36" y="218" width="4" height="1" fill="#808080"/>
<rect x="36" y="241" width="4" height="1" fill="#808080"/>
<rect x="36" y="263" width="4" height="1" fill="#808080"/>
<rect x="36" y="285" width="4" height="1" fill="#808080"/>
<rect x="36" y="308" width="4" height="1" fill="#808080"/>
<rect x="36" y="330" width="4" height="1" fill="#808080"/>
<rect x="36" y="352" width="4" height="1" fill="#808080"/>
<rect x="36" y="375" width="4" height="1" fill="#808080"/>
<rect x="36" y="397" width="4" height="1" fill="#808080"/>
<rect x="36" y="419" width="4" height="1" fill="#808080"/>
<rect x="36" y="442" width="4" height="1" fill="#808080"/>
<rect x="36" y="464" width="4" height="1" fill="#808080"/>
<rect x="36" y="486" width="4" height="1" fill="#808080"/>
<rect x="36" y="509" width="4" height="1" fill="#808080"/>
<rect x="36" y="531" width="4" height="1" fill="#808080"/>
<rect x="36" y="553" width="4" height="1" fill="#808080"/>
<rect x="36" y="576" width="4" height="1" fill="#808080"/>
<rect x="36" y="598" width="4" height="1" fill="#808080"/>
<rect x="36" y="620" width="4" height="1" fill="#808080"/>
<rect x="36" y="643" width="4" height="1" fill="#808080"/>
<rect x="36" y="665" width="4" height="1" fill="#808080"/>
<rect x="36" y="687" width="4" height="1" fill="#808080"/>
<rect x="36" y="710" width="4" height="1" fill="#808080"/>
<rect x="36" y="732" width="8" height="1" fill="#808080"/>
<rect x="73" y="732" width="8" height="1" fill="#808080"/>
<rect x="73" y="663" width="4" height="1" fill="#808080"/>
<rect x="73" y="593" width="4" height="1" fill="#808080"/>
<rect x="73" y="524" width="4" height="1" fill="#808080"/>
<rect x="73" y="454" width="4" height="1" fill="#808080"/>
<rect x="73" y="385" width="4" height="1" fill="#808080"/>
<rect x="73" y="315" width="4" height="1" fill="#808080"/>
<rect x="73" y="246" width="4" height="1" fill="#808080"/>
<rect x="73" y="176" width="4" height="1" fill="#808080"/>
<rect x="73" y="107" width="8" height="1" fill="#808080"/>
<rect x="110" y="62" width="8" height="1" fill="#808080"/>
<rect x="1314" y="62" width="9" height="1" fill="#808080"/>
<rect x="1351" y="62" width="9" height="1" fill="#808080"/>
<rect x="146" y="62" width="4" height="1" fill="#808080"/>
<rect x="1282" y="62" width="3" height="1" fill="#808080"/>
<rect x="110" y="129" width="4" height="1" fill="#808080"/>
<rect x="1356" y="129" width="5" height="1" fill="#808080"/>
<rect x="146" y="129" width="4" height="1" fill="#808080"/>
<rect x="1282" y="129" width="3" height="1" fill="#808080"/>
<rect x="110" y="196" width="4" height="1" fill="#808080"/>
<rect x="1356" y="196" width="5" height="1" fill="#808080"/>
<rect x="1319" y="196" width="5" height="1" fill="#808080"/>
<rect x="146" y="196" width="4" height="1" fill="#808080"/>
<rect x="1282" y="196" width="3" height="1" fill="#808080"/>
<rect x="110" y="263" width="4" height="1" fill="#808080"/>
<rect x="1356" y="263" width="5" height="1" fill="#808080"/>
<rect x="146" y="263" width="4" height="1" fill="#808080"/>
<rect x="1282" y="263" width="3" height="1" fill="#808080"/>
<rect x="110" y="330" width="4" height="1" fill="#808080"/>
<rect x="1356" y="330" width="5" height="1" fill="#808080"/>
<rect x="1319" y="330" width="5" height="1" fill="#808080"/>
<rect x="146" y="330" width="4" height="1" fill="#808080"/>
<rect x="1282" y="330" width="3" height="1" fill="#808080"/>
<rect x="110" y="397" width="4" height="1" fill="#808080"/>
<rect x="1356" y="397" width="5" height="1" fill="#808080"/>
<rect x="146" y="397" width="4" height="1" fill="#808080"/>
<rect x="1282" y="397" width="3" height="1" fill="#808080"/>
<rect x="110" y="464" width="4" height="1" fill="#808080"/>
<rect x="1356" y="464" width="5" height="1" fill="#808080"/>
<rect x="1319" y="464" width="5" height="1" fill="#808080"/>
<rect x="146" y="464" width="4" height="1" fill="#808080"/>
<rect x="1282" y="464" width="3" height="1" fill="#808080"/>
<rect x="110" y="531" width="4" height="1" fill="#808080"/>
<rect x="1356" y="531" width="5" height="1" fill="#808080"/>
<rect x="146" y="531" width="4" height="1" fill="#808080"/>
<rect x="1282" y="531" width="3" height="1" fill="#808080"/>
<rect x="110" y="598" width="4" height="1" fill="#808080"/>
<rect x="1356" y="598" width="5" height="1" fill="#808080"/>
<rect x="1319" y="598" width="5" height="1" fill="#808080"/>
<rect x="146" y="598" width="4" height="1" fill="#808080"/>
<rect x="1282" y="598" width="3" height="1" fill="#808080"/>
<rect x="110" y="665" width="4" height="1" fill="#808080"/>
<rect x="1356" y="665" width="5" height="1" fill="#808080"/>
<rect x="146" y="665" width="4" height="1" fill="#808080"/>
<rect x="1282" y="665" width="3" height="1" fill="#808080"/>
<rect x="110" y="732" width="8" height="1" fill="#808080"/>
<rect x="1314" y="732" width="9" height="1" fill="#808080"/>
<rect x="1351" y="732" width="9" height="1" fill="#808080"/>
<rect x="146" y="732" width="4" height="1" fill="#808080"/>
<rect x="1282" y="732" width="3" height="1" fill="#808080"/>
</g>
<g>
<text x="30.5" y="52.5" text-anchor="end" fill="#FF0000">°C</text>
<text x="43.5" y="52.5" fill="#00FF00" style="letter-spacing:0px">hPa</text>
<text x="73.5" y="52.5" fill="#000" style="letter-spacing:0.35px">km/h</text>
<text x="115.5" y="52.5" fill="#F0C800" style="letter-spacing:0.3px">UV-I</text>
<text x="1282" y="52.5" fill="#0080C0">%</text>
<text x="1318" y="52.5" fill="#00FFFF" style="letter-spacing:0.4px">l/m²</text>
<text x="1355" y="52.5" fill="#F0C800">min</text>
<text transform="translate(33.9,69) scale(0.88,1)" text-anchor="end" fill="#FF0000" style="font-size:14px;letter-spacing:-0.15px">40.0</text>
<text transform="translate(33.9,91) scale(0.88,1)" text-anchor="end" fill="#FF0000" style="font-size:14px;letter-spacing:-0.15px">38.0</text>
<text transform="translate(33.9,114) scale(0.88,1)" text-anchor="end" fill="#FF0000" style="font-size:14px;letter-spacing:-0.15px">36.0</text>
<text transform="translate(33.9,136) scale(0.88,1)" text-anchor="end" fill="#FF0000" style="font-size:14px;letter-spacing:-0.15px">34.0</text>
<text transform="translate(33.9,158) scale(0.88,1)" text-anchor="end" fill="#FF0000" style="font-size:14px;letter-spacing:-0.15px">32.0</text>
<text transform="translate(33.9,181) scale(0.88,1)" text-anchor="end" fill="#FF0000" style="font-size:14px;letter-spacing:-0.15px">30.0</text>
<text transform="translate(33.9,203) scale(0.88,1)" text-anchor="end" fill="#FF0000" style="font-size:14px;letter-spacing:-0.15px">28.0</text>
<text transform="translate(33.9,225) scale(0.88,1)" text-anchor="end" fill="#FF0000" style="font-size:14px;letter-spacing:-0.15px">26.0</text>
<text transform="translate(33.9,248) scale(0.88,1)" text-anchor="end" fill="#FF0000" style="font-size:14px;letter-spacing:-0.15px">24.0</text>
<text transform="translate(33.9,270) scale(0.88,1)" text-anchor="end" fill="#FF0000" style="font-size:14px;letter-spacing:-0.15px">22.0</text>
<text transform="translate(33.9,292) scale(0.88,1)" text-anchor="end" fill="#FF0000" style="font-size:14px;letter-spacing:-0.15px">20.0</text>
<text transform="translate(33.9,315) scale(0.88,1)" text-anchor="end" fill="#FF0000" style="font-size:14px;letter-spacing:-0.15px">18.0</text>
<text transform="translate(33.9,337) scale(0.88,1)" text-anchor="end" fill="#FF0000" style="font-size:14px;letter-spacing:-0.15px">16.0</text>
<text transform="translate(33.9,359) scale(0.88,1)" text-anchor="end" fill="#FF0000" style="font-size:14px;letter-spacing:-0.15px">14.0</text>
<text transform="translate(33.9,382) scale(0.88,1)" text-anchor="end" fill="#FF0000" style="font-size:14px;letter-spacing:-0.15px">12.0</text>
<text transform="translate(33.9,404) scale(0.88,1)" text-anchor="end" fill="#FF0000" style="font-size:14px;letter-spacing:-0.15px">10.0</text>
<text transform="translate(33.9,426) scale(0.88,1)" text-anchor="end" fill="#FF0000" style="font-size:14px;letter-spacing:-0.15px">8.0</text>
<text transform="translate(33.9,449) scale(0.88,1)" text-anchor="end" fill="#FF0000" style="font-size:14px;letter-spacing:-0.15px">6.0</text>
<text transform="translate(33.9,471) scale(0.88,1)" text-anchor="end" fill="#FF0000" style="font-size:14px;letter-spacing:-0.15px">4.0</text>
<text transform="translate(33.9,493) scale(0.88,1)" text-anchor="end" fill="#FF0000" style="font-size:14px;letter-spacing:-0.15px">2.0</text>
<text transform="translate(33.9,516) scale(0.88,1)" text-anchor="end" fill="#FF0000" style="font-size:14px;letter-spacing:-0.15px">0.0</text>
<text transform="translate(33.9,538) scale(0.88,1)" text-anchor="end" fill="#FF0000" style="font-size:14px;letter-spacing:-0.15px">-2.0</text>
<text transform="translate(33.9,560) scale(0.88,1)" text-anchor="end" fill="#FF0000" style="font-size:14px;letter-spacing:-0.15px">-4.0</text>
<text transform="translate(33.9,583) scale(0.88,1)" text-anchor="end" fill="#FF0000" style="font-size:14px;letter-spacing:-0.15px">-6.0</text>
<text transform="translate(33.9,605) scale(0.88,1)" text-anchor="end" fill="#FF0000" style="font-size:14px;letter-spacing:-0.15px">-8.0</text>
<text transform="translate(33.9,627) scale(0.88,1)" text-anchor="end" fill="#FF0000" style="font-size:14px;letter-spacing:-0.15px">-10.0</text>
<text transform="translate(33.9,650) scale(0.88,1)" text-anchor="end" fill="#FF0000" style="font-size:14px;letter-spacing:-0.15px">-12.0</text>
<text transform="translate(33.9,672) scale(0.88,1)" text-anchor="end" fill="#FF0000" style="font-size:14px;letter-spacing:-0.15px">-14.0</text>
<text transform="translate(33.9,694) scale(0.88,1)" text-anchor="end" fill="#FF0000" style="font-size:14px;letter-spacing:-0.15px">-16.0</text>
<text transform="translate(33.9,717) scale(0.88,1)" text-anchor="end" fill="#FF0000" style="font-size:14px;letter-spacing:-0.15px">-18.0</text>
<text transform="translate(33.9,739) scale(0.88,1)" text-anchor="end" fill="#FF0000" style="font-size:14px;letter-spacing:-0.15px">-20.0</text>
<text transform="translate(70.8,739) scale(0.88,1)" text-anchor="end" fill="#00FF00" style="font-size:14px;letter-spacing:-0.15px">982</text>
<text transform="translate(70.8,670) scale(0.88,1)" text-anchor="end" fill="#00FF00" style="font-size:14px;letter-spacing:-0.15px">987</text>
<text transform="translate(70.8,600) scale(0.88,1)" text-anchor="end" fill="#00FF00" style="font-size:14px;letter-spacing:-0.15px">992</text>
<text transform="translate(70.8,531) scale(0.88,1)" text-anchor="end" fill="#00FF00" style="font-size:14px;letter-spacing:-0.15px">997</text>
<text transform="translate(70.8,461) scale(0.88,1)" text-anchor="end" fill="#00FF00" style="font-size:14px;letter-spacing:-0.15px">1002</text>
<text transform="translate(70.8,392) scale(0.88,1)" text-anchor="end" fill="#00FF00" style="font-size:14px;letter-spacing:-0.15px">1007</text>
<text transform="translate(70.8,322) scale(0.88,1)" text-anchor="end" fill="#00FF00" style="font-size:14px;letter-spacing:-0.15px">1012</text>
<text transform="translate(70.8,253) scale(0.88,1)" text-anchor="end" fill="#00FF00" style="font-size:14px;letter-spacing:-0.15px">1017</text>
<text transform="translate(70.8,183) scale(0.88,1)" text-anchor="end" fill="#00FF00" style="font-size:14px;letter-spacing:-0.15px">1022</text>
<text transform="translate(70.8,114) scale(0.88,1)" text-anchor="end" fill="#00FF00" style="font-size:14px;letter-spacing:-0.15px">1027</text>
<text transform="translate(107.8,69) scale(0.88,1)" text-anchor="end" fill="#000" style="font-size:14px;letter-spacing:-0.15px">50.0</text>
<text transform="translate(145.9,69) scale(0.88,1)" text-anchor="end" fill="#F0C800" style="font-size:14px;letter-spacing:-0.15px">10.0</text>
<text transform="translate(1287,69) scale(0.88,1)" fill="#0080C0" style="font-size:14px;letter-spacing:-0.15px">100</text>
<text transform="translate(1324,69) scale(0.88,1)" fill="#00FFFF" style="font-size:14px;letter-spacing:-0.15px">5.0</text>
<text transform="translate(1361,69) scale(0.88,1)" fill="#F0C800" style="font-size:14px;letter-spacing:-0.15px">100</text>
<text transform="translate(107.8,136) scale(0.88,1)" text-anchor="end" fill="#000" style="font-size:14px;letter-spacing:-0.15px">45.0</text>
<text transform="translate(145.9,136) scale(0.88,1)" text-anchor="end" fill="#F0C800" style="font-size:14px;letter-spacing:-0.15px">9.0</text>
<text transform="translate(1287,136) scale(0.88,1)" fill="#0080C0" style="font-size:14px;letter-spacing:-0.15px">90</text>
<text transform="translate(1361,136) scale(0.88,1)" fill="#F0C800" style="font-size:14px;letter-spacing:-0.15px">90</text>
<text transform="translate(107.8,203) scale(0.88,1)" text-anchor="end" fill="#000" style="font-size:14px;letter-spacing:-0.15px">40.0</text>
<text transform="translate(145.9,203) scale(0.88,1)" text-anchor="end" fill="#F0C800" style="font-size:14px;letter-spacing:-0.15px">8.0</text>
<text transform="translate(1287,203) scale(0.88,1)" fill="#0080C0" style="font-size:14px;letter-spacing:-0.15px">80</text>
<text transform="translate(1324,203) scale(0.88,1)" fill="#00FFFF" style="font-size:14px;letter-spacing:-0.15px">4.0</text>
<text transform="translate(1361,203) scale(0.88,1)" fill="#F0C800" style="font-size:14px;letter-spacing:-0.15px">80</text>
<text transform="translate(107.8,270) scale(0.88,1)" text-anchor="end" fill="#000" style="font-size:14px;letter-spacing:-0.15px">35.0</text>
<text transform="translate(145.9,270) scale(0.88,1)" text-anchor="end" fill="#F0C800" style="font-size:14px;letter-spacing:-0.15px">7.0</text>
<text transform="translate(1287,270) scale(0.88,1)" fill="#0080C0" style="font-size:14px;letter-spacing:-0.15px">70</text>
<text transform="translate(1361,270) scale(0.88,1)" fill="#F0C800" style="font-size:14px;letter-spacing:-0.15px">70</text>
<text transform="translate(107.8,337) scale(0.88,1)" text-anchor="end" fill="#000" style="font-size:14px;letter-spacing:-0.15px">30.0</text>
<text transform="translate(145.9,337) scale(0.88,1)" text-anchor="end" fill="#F0C800" style="font-size:14px;letter-spacing:-0.15px">6.0</text>
<text transform="translate(1287,337) scale(0.88,1)" fill="#0080C0" style="font-size:14px;letter-spacing:-0.15px">60</text>
<text transform="translate(1324,337) scale(0.88,1)" fill="#00FFFF" style="font-size:14px;letter-spacing:-0.15px">3.0</text>
<text transform="translate(1361,337) scale(0.88,1)" fill="#F0C800" style="font-size:14px;letter-spacing:-0.15px">60</text>
<text transform="translate(107.8,404) scale(0.88,1)" text-anchor="end" fill="#000" style="font-size:14px;letter-spacing:-0.15px">25.0</text>
<text transform="translate(145.9,404) scale(0.88,1)" text-anchor="end" fill="#F0C800" style="font-size:14px;letter-spacing:-0.15px">5.0</text>
<text transform="translate(1287,404) scale(0.88,1)" fill="#0080C0" style="font-size:14px;letter-spacing:-0.15px">50</text>
<text transform="translate(1361,404) scale(0.88,1)" fill="#F0C800" style="font-size:14px;letter-spacing:-0.15px">50</text>
<text transform="translate(107.8,471) scale(0.88,1)" text-anchor="end" fill="#000" style="font-size:14px;letter-spacing:-0.15px">20.0</text>
<text transform="translate(145.9,471) scale(0.88,1)" text-anchor="end" fill="#F0C800" style="font-size:14px;letter-spacing:-0.15px">4.0</text>
<text transform="translate(1287,471) scale(0.88,1)" fill="#0080C0" style="font-size:14px;letter-spacing:-0.15px">40</text>
<text transform="translate(1324,471) scale(0.88,1)" fill="#00FFFF" style="font-size:14px;letter-spacing:-0.15px">2.0</text>
<text transform="translate(1361,471) scale(0.88,1)" fill="#F0C800" style="font-size:14px;letter-spacing:-0.15px">40</text>
<text transform="translate(107.8,538) scale(0.88,1)" text-anchor="end" fill="#000" style="font-size:14px;letter-spacing:-0.15px">15.0</text>
<text transform="translate(145.9,538) scale(0.88,1)" text-anchor="end" fill="#F0C800" style="font-size:14px;letter-spacing:-0.15px">3.0</text>
<text transform="translate(1287,538) scale(0.88,1)" fill="#0080C0" style="font-size:14px;letter-spacing:-0.15px">30</text>
<text transform="translate(1361,538) scale(0.88,1)" fill="#F0C800" style="font-size:14px;letter-spacing:-0.15px">30</text>
<text transform="translate(107.8,605) scale(0.88,1)" text-anchor="end" fill="#000" style="font-size:14px;letter-spacing:-0.15px">10.0</text>
<text transform="translate(145.9,605) scale(0.88,1)" text-anchor="end" fill="#F0C800" style="font-size:14px;letter-spacing:-0.15px">2.0</text>
<text transform="translate(1287,605) scale(0.88,1)" fill="#0080C0" style="font-size:14px;letter-spacing:-0.15px">20</text>
<text transform="translate(1324,605) scale(0.88,1)" fill="#00FFFF" style="font-size:14px;letter-spacing:-0.15px">1.0</text>
<text transform="translate(1361,605) scale(0.88,1)" fill="#F0C800" style="font-size:14px;letter-spacing:-0.15px">20</text>
<text transform="translate(107.8,672) scale(0.88,1)" text-anchor="end" fill="#000" style="font-size:14px;letter-spacing:-0.15px">5.0</text>
<text transform="translate(145.9,672) scale(0.88,1)" text-anchor="end" fill="#F0C800" style="font-size:14px;letter-spacing:-0.15px">1.0</text>
<text transform="translate(1287,672) scale(0.88,1)" fill="#0080C0" style="font-size:14px;letter-spacing:-0.15px">10</text>
<text transform="translate(1361,672) scale(0.88,1)" fill="#F0C800" style="font-size:14px;letter-spacing:-0.15px">10</text>
<text transform="translate(107.8,739) scale(0.88,1)" text-anchor="end" fill="#000" style="font-size:14px;letter-spacing:-0.15px">0.0</text>
<text transform="translate(145.9,739) scale(0.88,1)" text-anchor="end" fill="#F0C800" style="font-size:14px;letter-spacing:-0.15px">0.0</text>
<text transform="translate(1287,739) scale(0.88,1)" fill="#0080C0" style="font-size:14px;letter-spacing:-0.15px">0</text>
<text transform="translate(1324,739) scale(0.88,1)" fill="#00FFFF" style="font-size:14px;letter-spacing:-0.15px">0.0</text>
<text transform="translate(1361,739) scale(0.88,1)" fill="#F0C800" style="font-size:14px;letter-spacing:-0.15px">0</text>
<text transform="translate(153,753) scale(0.88,1)" text-anchor="middle" fill="#000" style="font-size:14px;letter-spacing:-0.15px">00:00</text>
<text transform="translate(200,753) scale(0.88,1)" text-anchor="middle" fill="#000" style="font-size:14px;letter-spacing:-0.15px">01:00</text>
<text transform="translate(247,753) scale(0.88,1)" text-anchor="middle" fill="#000" style="font-size:14px;letter-spacing:-0.15px">02:00</text>
<text transform="translate(294,753) scale(0.88,1)" text-anchor="middle" fill="#000" style="font-size:14px;letter-spacing:-0.15px">03:00</text>
<text transform="translate(341,753) scale(0.88,1)" text-anchor="middle" fill="#000" style="font-size:14px;letter-spacing:-0.15px">04:00</text>
<text transform="translate(388,753) scale(0.88,1)" text-anchor="middle" fill="#000" style="font-size:14px;letter-spacing:-0.15px">05:00</text>
<text transform="translate(435,753) scale(0.88,1)" text-anchor="middle" fill="#000" style="font-size:14px;letter-spacing:-0.15px">06:00</text>
<text transform="translate(483,753) scale(0.88,1)" text-anchor="middle" fill="#000" style="font-size:14px;letter-spacing:-0.15px">07:00</text>
<text transform="translate(530,753) scale(0.88,1)" text-anchor="middle" fill="#000" style="font-size:14px;letter-spacing:-0.15px">08:00</text>
<text transform="translate(577,753) scale(0.88,1)" text-anchor="middle" fill="#000" style="font-size:14px;letter-spacing:-0.15px">09:00</text>
<text transform="translate(624,753) scale(0.88,1)" text-anchor="middle" fill="#000" style="font-size:14px;letter-spacing:-0.15px">10:00</text>
<text transform="translate(671,753) scale(0.88,1)" text-anchor="middle" fill="#000" style="font-size:14px;letter-spacing:-0.15px">11:00</text>
<text transform="translate(718,753) scale(0.88,1)" text-anchor="middle" fill="#000" style="font-size:14px;letter-spacing:-0.15px">12:00</text>
<text transform="translate(765,753) scale(0.88,1)" text-anchor="middle" fill="#000" style="font-size:14px;letter-spacing:-0.15px">13:00</text>
<text transform="translate(812,753) scale(0.88,1)" text-anchor="middle" fill="#000" style="font-size:14px;letter-spacing:-0.15px">14:00</text>
<text transform="translate(859,753) scale(0.88,1)" text-anchor="middle" fill="#000" style="font-size:14px;letter-spacing:-0.15px">15:00</text>
<text transform="translate(906,753) scale(0.88,1)" text-anchor="middle" fill="#000" style="font-size:14px;letter-spacing:-0.15px">16:00</text>
<text transform="translate(953,753) scale(0.88,1)" text-anchor="middle" fill="#000" style="font-size:14px;letter-spacing:-0.15px">17:00</text>
<text transform="translate(1000,753) scale(0.88,1)" text-anchor="middle" fill="#000" style="font-size:14px;letter-spacing:-0.15px">18:00</text>
<text transform="translate(1048,753) scale(0.88,1)" text-anchor="middle" fill="#000" style="font-size:14px;letter-spacing:-0.15px">19:00</text>
<text transform="translate(1095,753) scale(0.88,1)" text-anchor="middle" fill="#000" style="font-size:14px;letter-spacing:-0.15px">20:00</text>
<text transform="translate(1142,753) scale(0.88,1)" text-anchor="middle" fill="#000" style="font-size:14px;letter-spacing:-0.15px">21:00</text>
<text transform="translate(1189,753) scale(0.88,1)" text-anchor="middle" fill="#000" style="font-size:14px;letter-spacing:-0.15px">22:00</text>
<text transform="translate(1236,753) scale(0.88,1)" text-anchor="middle" fill="#000" style="font-size:14px;letter-spacing:-0.15px">23:00</text>
<text transform="translate(1283,753) scale(0.88,1)" text-anchor="middle" fill="#000" style="font-size:14px;letter-spacing:-0.15px">24:00</text>
</g>
<text transform="translate(10.3,764) scale(0.88,1)" fill="#000" style="font-size:14px;letter-spacing:-0.15px">08:02</text>
<path d="M44 761 v-2 a4.5 4.2 0 0 1 9 0 v2 z" fill="#FFFF00"/>
<rect x="481" y="747.3" width="46" height="20" fill="#fff"/>
<text transform="translate(481,764) scale(0.88,1)" fill="#000" style="font-size:14px;letter-spacing:-0.15px">07:49</text>
<g stroke="#FFFF90" stroke-width="1"><line x1="513.5" y1="758.5" x2="524.5" y2="758.5"/><line x1="519" y1="753" x2="519" y2="764"/><line x1="515" y1="754.5" x2="523" y2="762.5"/><line x1="515" y1="762.5" x2="523" y2="754.5"/></g>
<circle cx="519" cy="758.5" r="3.3" fill="#FFFF00"/>
<rect x="852.5" y="747.3" width="52.5" height="20" fill="#fff"/>
<text transform="translate(860.3,764) scale(0.88,1)" fill="#000" style="font-size:14px;letter-spacing:-0.15px">15:52</text>
<rect x="895.5" y="755.5" width="5" height="5" fill="none" stroke="#FFFF60" stroke-width="1"/>
<rect x="518" y="728" width="2" height="13" fill="#FFFF00"/>
<rect x="897" y="728" width="2" height="13" fill="#FFFF00"/>
</svg>
<div id="tbl">
<div class="sep" style="left:107px"></div>
<div class="sep" style="left:251px"></div>
<div class="sep" style="left:396px"></div>
<div class="sep" style="left:541px"></div>
<div class="sep" style="left:686px"></div>
<div class="sep" style="left:831px"></div>
<div class="sep3" style="left:976px"></div>
<div class="sep3" style="left:1121px"></div>
<div style="top:10.2px;left:9.5px;font-weight:bold;font-size:14px;letter-spacing:0.3px;">Sensor</div>
<div style="top:30.2px;left:9.5px;font-weight:bold;font-size:14px;letter-spacing:0.25px;">MinWert</div>
<div style="top:49.2px;left:9.5px;font-weight:bold;font-size:14px;letter-spacing:0.35px;">MaxWert</div>
<div style="top:69.2px;left:9.5px;font-weight:bold;font-size:14px;letter-spacing:-0.18px;">Durchschnitt</div>
<div style="top:89.2px;left:9.5px;font-weight:bold;font-size:14px;letter-spacing:0.25px;">01.12. 23:55</div>
<div style="top:10.2px;left:114.3px;font-weight:bold;font-size:14px;letter-spacing:0.63px;">Temp. A.</div>
<div style="top:10.2px;right:1155.1px;font-weight:bold;font-size:14px;letter-spacing:0.25px;">°C</div>
<div style="top:29.8px;left:121.0px;font-size:14px;letter-spacing:-0.15px;transform:scaleX(0.88);transform-origin:left center;margin-top:0.3px;">06:10</div>
<div style="top:29.8px;right:1155.1px;font-size:14px;letter-spacing:-0.15px;transform:scaleX(0.88);transform-origin:right center;margin-top:0.3px;">-1.5</div>
<div style="top:48.8px;left:121.0px;font-size:14px;letter-spacing:-0.15px;transform:scaleX(0.88);transform-origin:left center;margin-top:0.3px;">19:50</div>
<div style="top:48.8px;right:1155.1px;font-size:14px;letter-spacing:-0.15px;transform:scaleX(0.88);transform-origin:right center;margin-top:0.3px;">6.3</div>
<div style="top:68.8px;right:1155.1px;font-size:14px;letter-spacing:-0.15px;transform:scaleX(0.88);transform-origin:right center;margin-top:0.3px;">2.26</div>
<div style="top:89.2px;right:1155.1px;font-weight:bold;font-size:14px;letter-spacing:0.25px;">4.4</div>
<div style="top:10.2px;left:259.8px;font-weight:bold;font-size:14px;letter-spacing:0.12px;">Feuchte A.</div>
<div style="top:10.2px;right:1010.1px;font-weight:bold;font-size:14px;letter-spacing:0.25px;">%</div>
<div style="top:29.8px;left:265.9px;font-size:14px;letter-spacing:-0.15px;transform:scaleX(0.88);transform-origin:left center;margin-top:0.3px;">17:50</div>
<div style="top:29.8px;right:1010.1px;font-size:14px;letter-spacing:-0.15px;transform:scaleX(0.88);transform-origin:right center;margin-top:0.3px;">93</div>
<div style="top:48.8px;left:265.9px;font-size:14px;letter-spacing:-0.15px;transform:scaleX(0.88);transform-origin:left center;margin-top:0.3px;">14:20</div>
<div style="top:48.8px;right:1010.1px;font-size:14px;letter-spacing:-0.15px;transform:scaleX(0.88);transform-origin:right center;margin-top:0.3px;">96</div>
<div style="top:68.8px;right:1010.1px;font-size:14px;letter-spacing:-0.15px;transform:scaleX(0.88);transform-origin:right center;margin-top:0.3px;">95</div>
<div style="top:88.8px;left:260.2px;font-size:13px;letter-spacing:0.0px;">0.1 l Luft:</div>
<div style="top:89.2px;right:1010.1px;font-weight:bold;font-size:14px;letter-spacing:0.25px;">94</div>
<div style="top:10.2px;left:404.8px;font-weight:bold;font-size:14px;letter-spacing:-0.3px;">Luftdruck</div>
<div style="top:10.2px;right:865.3px;font-weight:bold;font-size:14px;letter-spacing:0.25px;">hPa</div>
<div style="top:29.8px;left:410.9px;font-size:14px;letter-spacing:-0.15px;transform:scaleX(0.88);transform-origin:left center;margin-top:0.3px;">21:35</div>
<div style="top:29.8px;right:865.3px;font-size:14px;letter-spacing:-0.15px;transform:scaleX(0.88);transform-origin:right center;margin-top:0.3px;">992.6</div>
<div style="top:48.8px;left:410.9px;font-size:14px;letter-spacing:-0.15px;transform:scaleX(0.88);transform-origin:left center;margin-top:0.3px;">04:15</div>
<div style="top:48.8px;right:865.3px;font-size:14px;letter-spacing:-0.15px;transform:scaleX(0.88);transform-origin:right center;margin-top:0.3px;">1004.1</div>
<div style="top:68.8px;left:405.2px;font-size:13px;letter-spacing:0.0px;">^1.7hPa/h</div>
<div style="top:68.8px;right:865.3px;font-size:14px;letter-spacing:-0.15px;transform:scaleX(0.88);transform-origin:right center;margin-top:0.3px;">998.9</div>
<div style="top:88.8px;left:405.2px;font-size:13px;letter-spacing:0.0px;">Barometer fällt</div>
<div style="top:89.2px;right:865.3px;font-weight:bold;font-size:14px;letter-spacing:0.25px;">994.1</div>
<div style="top:10.2px;left:549.3px;font-weight:bold;font-size:14px;letter-spacing:0.25px;">Wind</div>
<div style="top:10.2px;right:720.1px;font-weight:bold;font-size:14px;letter-spacing:0.25px;">km/h</div>
<div style="top:29.8px;left:549.7px;font-size:13px;letter-spacing:0.0px;">Ø 10 min.</div>
<div style="top:29.8px;right:720.1px;font-size:14px;letter-spacing:-0.15px;transform:scaleX(0.88);transform-origin:right center;margin-top:0.3px;">11.6</div>
<div style="top:48.8px;left:555.9px;font-size:14px;letter-spacing:-0.15px;transform:scaleX(0.88);transform-origin:left center;margin-top:0.3px;">23:50</div>
<div style="top:48.8px;right:720.1px;font-size:14px;letter-spacing:-0.15px;transform:scaleX(0.88);transform-origin:right center;margin-top:0.3px;">W 12.6</div>
<div style="top:68.8px;left:555.9px;font-size:13px;letter-spacing:-0.2px;">3,8 km</div>
<div style="top:68.8px;right:720.1px;font-size:14px;letter-spacing:-0.15px;transform:scaleX(0.88);transform-origin:right center;margin-top:0.3px;">2.7</div>
<div style="top:88.8px;left:555.9px;font-size:13px;letter-spacing:0.0px;">2 Bft O-SO</div>
<div style="top:89.2px;right:720.1px;font-weight:bold;font-size:14px;letter-spacing:0.25px;">10.8</div>
<div style="top:10.2px;left:695.6px;font-weight:bold;font-size:14px;letter-spacing:-0.1px;">Richtung</div>
<div style="top:29.8px;left:702.1px;font-size:14px;letter-spacing:-0.15px;transform:scaleX(0.88);transform-origin:left center;margin-top:0.3px;">15:25</div>
<div style="top:29.8px;right:575.0px;font-size:13px;letter-spacing:-0.2px;">N-NO</div>
<div style="top:48.8px;left:702.1px;font-size:14px;letter-spacing:-0.15px;transform:scaleX(0.88);transform-origin:left center;margin-top:0.3px;">15:50</div>
<div style="top:48.8px;right:575.0px;font-size:14px;letter-spacing:-0.15px;transform:scaleX(0.88);transform-origin:right center;margin-top:0.3px;">N</div>
<div style="top:68.8px;right:575.0px;font-size:13px;letter-spacing:-0.2px;">O-NO</div>
<div style="top:88.8px;left:696.0px;font-size:14px;letter-spacing:-0.15px;transform:scaleX(0.88);transform-origin:left center;margin-top:0.3px;">157 °</div>
<div style="top:89.2px;right:575.0px;font-weight:bold;font-size:14px;letter-spacing:0.25px;">S-SO</div>
<div style="top:10.2px;left:840.6px;font-weight:bold;font-size:14px;letter-spacing:0.65px;">Regen</div>
<div style="top:10.2px;right:429.3px;font-weight:bold;font-size:14px;letter-spacing:0.85px;">l/m²</div>
<div style="top:48.8px;left:847.1px;font-size:14px;letter-spacing:-0.15px;transform:scaleX(0.88);transform-origin:left center;margin-top:0.3px;">21:10</div>
<div style="top:48.8px;right:429.3px;font-size:14px;letter-spacing:-0.15px;transform:scaleX(0.88);transform-origin:right center;margin-top:0.3px;">0.7</div>
<div style="top:68.8px;left:841.0px;font-size:13px;letter-spacing:0.0px;">Gesamt:</div>
<div style="top:68.8px;right:429.3px;font-size:14px;letter-spacing:-0.15px;transform:scaleX(0.88);transform-origin:right center;margin-top:0.3px;">3.4</div>
<div style="top:88.8px;left:841.0px;font-size:13px;letter-spacing:-0.2px;">0.1 l/m²</div>
<div style="top:89.2px;right:429.3px;font-weight:bold;font-size:14px;letter-spacing:0.25px;">0.0</div>
<div style="top:10.2px;left:986.8px;font-weight:bold;font-size:14px;letter-spacing:0.25px;">Temp.+5cm</div>
<div style="top:10.2px;right:284.5px;font-weight:bold;font-size:14px;letter-spacing:0.25px;">°C</div>
<div style="top:29.8px;left:992.1px;font-size:14px;letter-spacing:-0.15px;transform:scaleX(0.88);transform-origin:left center;margin-top:0.3px;">06:00</div>
<div style="top:29.8px;right:284.5px;font-size:14px;letter-spacing:-0.15px;transform:scaleX(0.88);transform-origin:right center;margin-top:0.3px;">-3.4</div>
<div style="top:48.8px;left:992.1px;font-size:14px;letter-spacing:-0.15px;transform:scaleX(0.88);transform-origin:left center;margin-top:0.3px;">19:10</div>
<div style="top:48.8px;right:284.5px;font-size:14px;letter-spacing:-0.15px;transform:scaleX(0.88);transform-origin:right center;margin-top:0.3px;">5.4</div>
<div style="top:68.8px;right:284.5px;font-size:14px;letter-spacing:-0.15px;transform:scaleX(0.88);transform-origin:right center;margin-top:0.3px;">1.50</div>
<div style="top:89.2px;right:284.5px;font-weight:bold;font-size:14px;letter-spacing:0.25px;">4.2</div>
<div style="top:10.2px;left:1130.6px;font-weight:bold;font-size:14px;letter-spacing:0.25px;">PMV-1:1</div>
<div style="top:29.8px;left:1131.0px;font-size:13px;letter-spacing:-0.2px;">WC 1.8 °C</div>
<div style="top:48.8px;left:1131.0px;font-size:13px;letter-spacing:-0.2px;">TP 3.5 °C</div>
<div style="top:68.8px;left:1131.0px;font-size:13px;letter-spacing:0.0px;">1.3hPa/3h</div>
<div style="top:88.8px;left:1131.0px;font-size:13px;letter-spacing:0.0px;">0.0hPa/1h</div>
<div style="left:489px;top:86px;width:10px;height:12px;background:#E4ECE4;"></div>
<div style="left:490.5px;top:88.5px;width:6px;height:6px;background:#000;transform:rotate(45deg);"></div>
</div>
</body></html>
